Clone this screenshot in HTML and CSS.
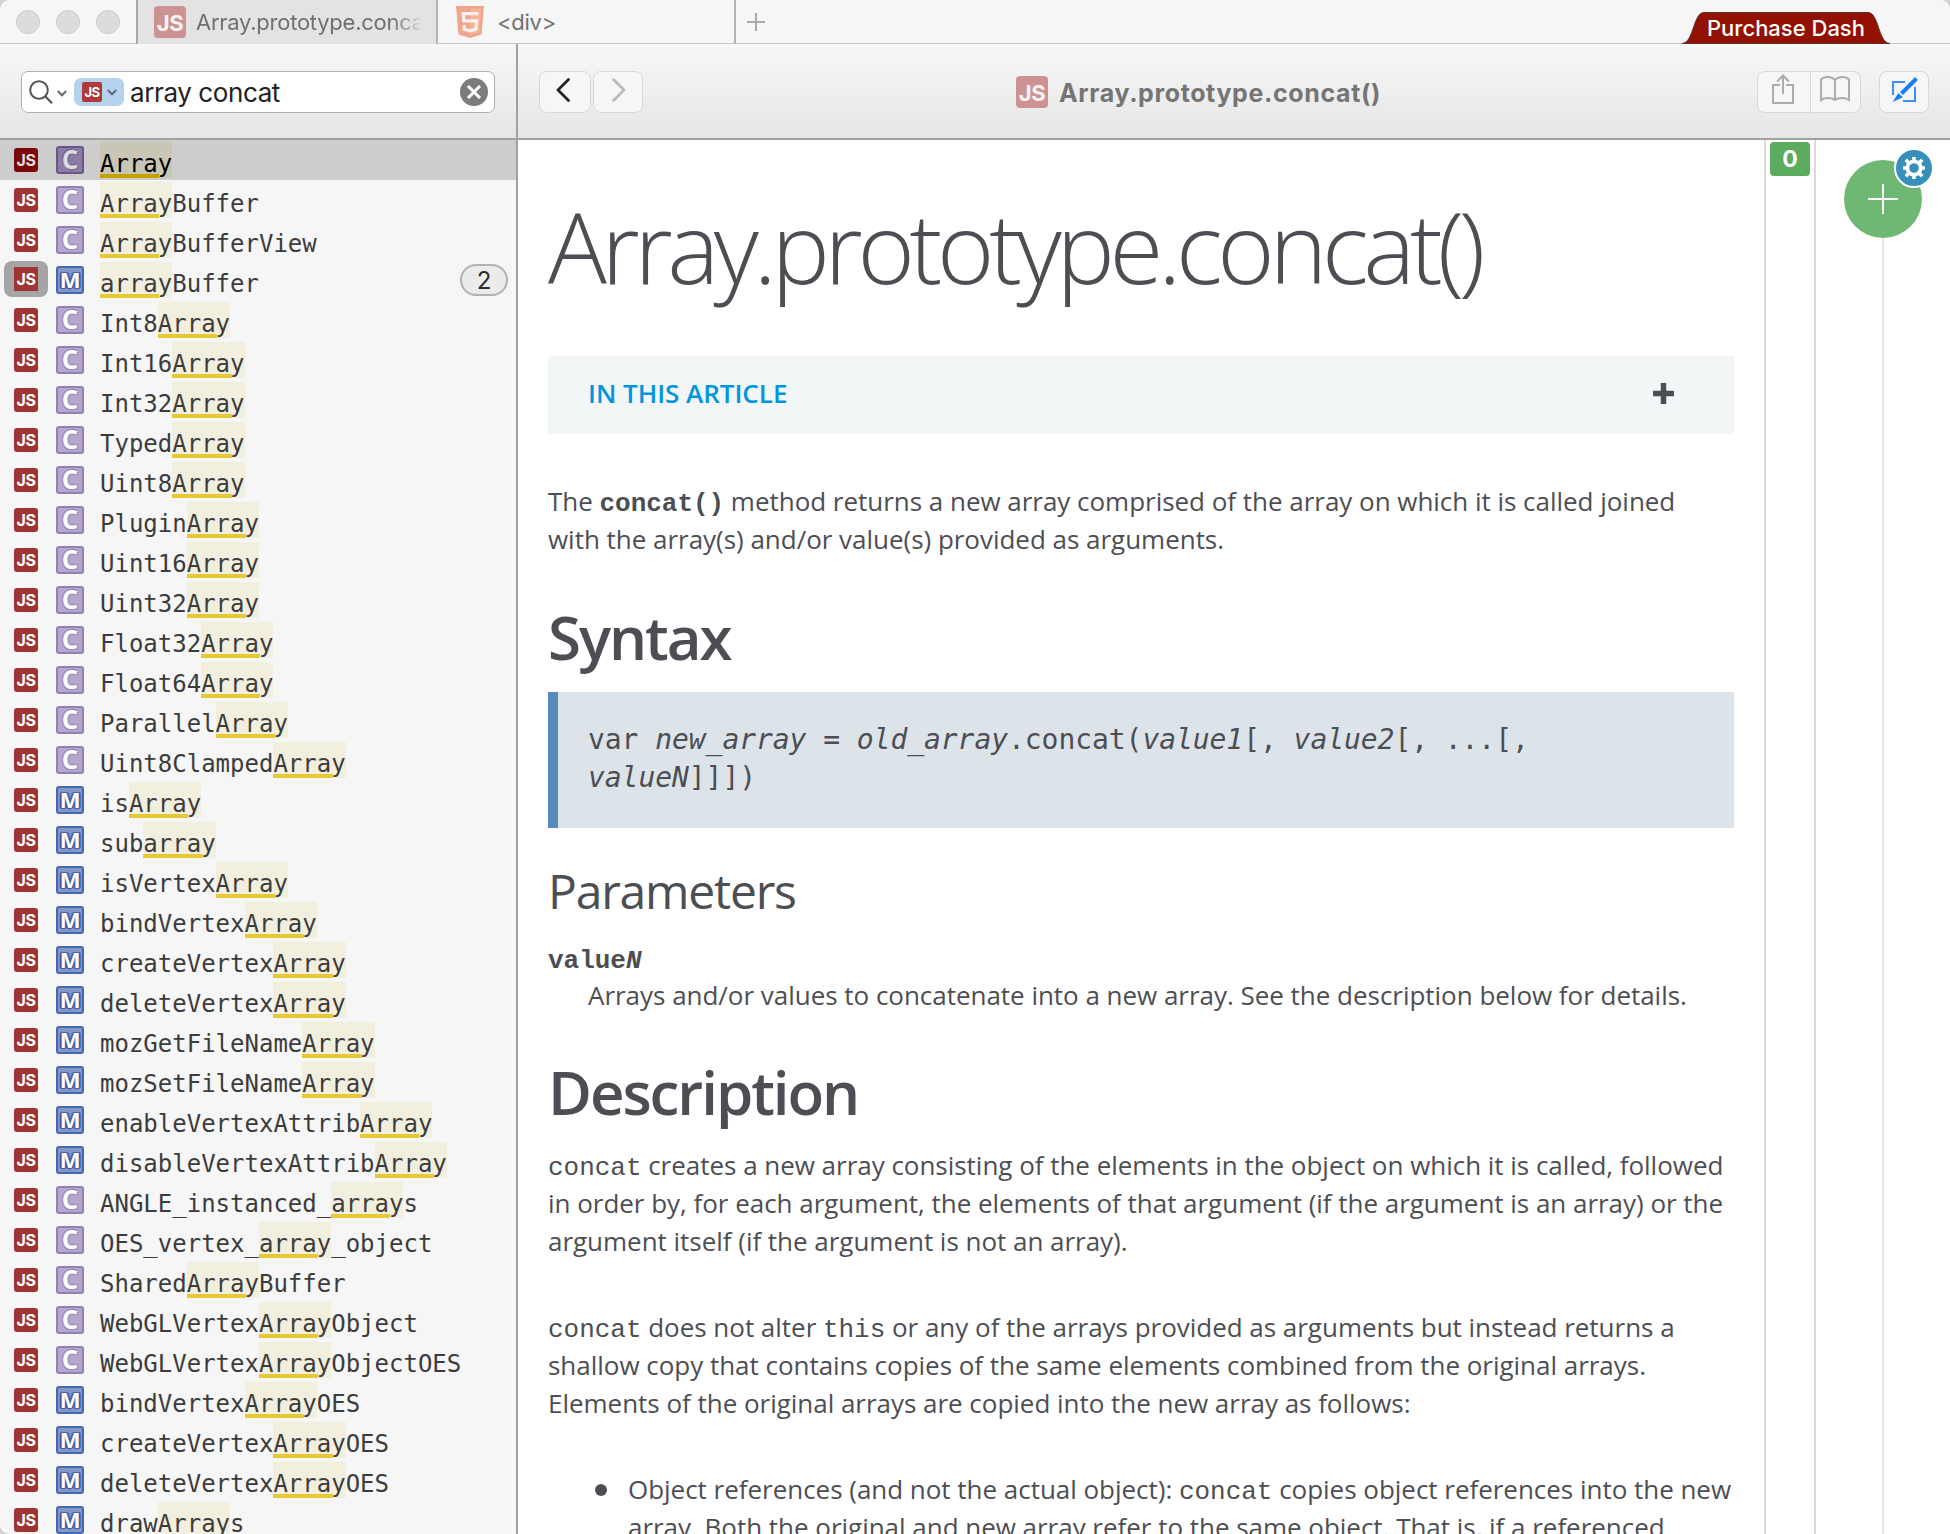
FILE: index.html
```html
<!DOCTYPE html>
<html lang="en">
<head>
<meta charset="utf-8">
<title>Array.prototype.concat()</title>
<link rel="stylesheet" href="styles.css">
</head>
<body>
<div class="window">
  <header class="titlebar">
    <div class="lights"><i></i><i></i><i></i></div>
    <div class="tab active"><b class="js js-lg faded">JS</b><span class="tab-text fade">Array.prototype.concat()</span></div>
    <div class="tab">
      <svg class="html5" width="28" height="32" viewBox="0 0 28 32"><path fill="#f0a58f" d="M0 0h28l-2.500 28.500L14 32 2.500 28.500z"/><path fill="#f5b295" d="M14 2.500h11.300l-2.100 24L14 29z"/><path fill="none" stroke="#fbf1ed" stroke-width="3.200" d="M22.500 7.600H7.200l.7 7.300h12.800l-.8 8.300-5.900 1.700-5.700-1.700-.3-4"/></svg>
      <span class="tab-text">&lt;div&gt;</span>
    </div>
    <div class="newtab"><svg width="18" height="18" viewBox="0 0 18 18"><path stroke="#a9a9a9" stroke-width="2" d="M9 0v18M0 9h18"/></svg></div>
    <div class="purchase">
      <svg width="208" height="32" viewBox="0 0 208 32"><path fill="#931100" stroke="#5c3029" d="M0 31.500C12 31 11 .5 22 .5h164C197 .5 196 31 208 31.500z"/></svg>
      <span>Purchase Dash</span>
    </div>
  </header>
  <div class="toolbar">
    <div class="search-pane">
      <div class="search">
        <svg class="glass" width="24" height="25" viewBox="0 0 24 25"><circle cx="10" cy="10" r="8.800" fill="none" stroke="#555" stroke-width="2"/><path stroke="#555" stroke-width="2.200" d="M16.200 16.200l6.800 7"/></svg>
        <svg class="chev" width="10" height="7" viewBox="0 0 10 7"><path fill="none" stroke="#6a6a6a" stroke-width="2" d="M.8 1l4.200 4.300L9.200 1"/></svg>
        <div class="token"><b class="js js-sm">JS</b><svg width="10" height="7" viewBox="0 0 10 7"><path fill="none" stroke="#5e6d7c" stroke-width="2" d="M.8 1l4.200 4.300L9.200 1"/></svg></div>
        <span class="query">array concat</span>
        <svg class="clear" width="28" height="28" viewBox="0 0 28 28"><circle cx="14" cy="14" r="14" fill="#7c7c7c"/><path stroke="#fff" stroke-width="3" d="M8 8l12 12M20 8L8 20"/></svg>
      </div>
    </div>
    <div class="doc-bar">
      <div class="nav">
        <div class="btn back"><svg width="14" height="24" viewBox="0 0 14 24"><path fill="none" stroke="#222" stroke-width="2.800" stroke-linecap="round" stroke-linejoin="round" d="M12.500 1.500L2 12l10.500 10.500"/></svg></div>
        <div class="btn fwd"><svg width="14" height="24" viewBox="0 0 14 24"><path fill="none" stroke="#b9b9b9" stroke-width="2.500" stroke-linecap="round" stroke-linejoin="round" d="M1.500 1.500L12 12 1.500 22.500"/></svg></div>
      </div>
      <div class="doc-title"><b class="js js-lg faded">JS</b><span>Array.prototype.concat()</span></div>
      <div class="actions">
        <div class="btn share"><svg width="22" height="30" viewBox="0 0 22 30"><path fill="none" stroke="#acacac" stroke-width="2" d="M8 11H1v18h20V11h-7M11 20V2M5.200 7.500L11 1.500l5.800 6"/></svg></div>
        <div class="btn book"><svg width="30" height="26" viewBox="0 0 30 26"><path fill="none" stroke="#acacac" stroke-width="2" d="M15 4C12 .2 4 .2 1 3.500V24c3.500-2.800 11-2.800 14 0 3-2.800 10.500-2.800 14 0V3.500C26 .2 18 .2 15 4zv20"/></svg></div>
        <div class="btn edit"><svg width="27" height="26" viewBox="0 0 27 26"><path fill="none" stroke="#3a8ffb" stroke-width="2" d="M14 5H2v13M24 10v14H12"/><path stroke="#147efb" stroke-width="4" d="M10.500 16.500L25.500 1.500"/><path fill="#147efb" d="M7.500 16l4.300 4.300L1.500 25z"/></svg></div>
      </div>
    </div>
  </div>
  <div class="main">
    <ul class="results">
      <li class="sel"><b class="js">JS</b><b class="c">C</b><span><mark>Array</mark></span></li>
      <li><b class="js">JS</b><b class="c">C</b><span><mark>Array</mark>Buffer</span></li>
      <li><b class="js">JS</b><b class="c">C</b><span><mark>Array</mark>BufferView</span></li>
      <li class="group"><b class="js">JS</b><b class="m">M</b><span><mark>array</mark>Buffer</span><em class="count">2</em></li>
      <li><b class="js">JS</b><b class="c">C</b><span>Int8<mark>Array</mark></span></li>
      <li><b class="js">JS</b><b class="c">C</b><span>Int16<mark>Array</mark></span></li>
      <li><b class="js">JS</b><b class="c">C</b><span>Int32<mark>Array</mark></span></li>
      <li><b class="js">JS</b><b class="c">C</b><span>Typed<mark>Array</mark></span></li>
      <li><b class="js">JS</b><b class="c">C</b><span>Uint8<mark>Array</mark></span></li>
      <li><b class="js">JS</b><b class="c">C</b><span>Plugin<mark>Array</mark></span></li>
      <li><b class="js">JS</b><b class="c">C</b><span>Uint16<mark>Array</mark></span></li>
      <li><b class="js">JS</b><b class="c">C</b><span>Uint32<mark>Array</mark></span></li>
      <li><b class="js">JS</b><b class="c">C</b><span>Float32<mark>Array</mark></span></li>
      <li><b class="js">JS</b><b class="c">C</b><span>Float64<mark>Array</mark></span></li>
      <li><b class="js">JS</b><b class="c">C</b><span>Parallel<mark>Array</mark></span></li>
      <li><b class="js">JS</b><b class="c">C</b><span>Uint8Clamped<mark>Array</mark></span></li>
      <li><b class="js">JS</b><b class="m">M</b><span>is<mark>Array</mark></span></li>
      <li><b class="js">JS</b><b class="m">M</b><span>sub<mark>array</mark></span></li>
      <li><b class="js">JS</b><b class="m">M</b><span>isVertex<mark>Array</mark></span></li>
      <li><b class="js">JS</b><b class="m">M</b><span>bindVertex<mark>Array</mark></span></li>
      <li><b class="js">JS</b><b class="m">M</b><span>createVertex<mark>Array</mark></span></li>
      <li><b class="js">JS</b><b class="m">M</b><span>deleteVertex<mark>Array</mark></span></li>
      <li><b class="js">JS</b><b class="m">M</b><span>mozGetFileName<mark>Array</mark></span></li>
      <li><b class="js">JS</b><b class="m">M</b><span>mozSetFileName<mark>Array</mark></span></li>
      <li><b class="js">JS</b><b class="m">M</b><span>enableVertexAttrib<mark>Array</mark></span></li>
      <li><b class="js">JS</b><b class="m">M</b><span>disableVertexAttrib<mark>Array</mark></span></li>
      <li><b class="js">JS</b><b class="c">C</b><span>ANGLE_instanced_<mark>array</mark>s</span></li>
      <li><b class="js">JS</b><b class="c">C</b><span>OES_vertex_<mark>array</mark>_object</span></li>
      <li><b class="js">JS</b><b class="c">C</b><span>Shared<mark>Array</mark>Buffer</span></li>
      <li><b class="js">JS</b><b class="c">C</b><span>WebGLVertex<mark>Array</mark>Object</span></li>
      <li><b class="js">JS</b><b class="c">C</b><span>WebGLVertex<mark>Array</mark>ObjectOES</span></li>
      <li><b class="js">JS</b><b class="m">M</b><span>bindVertex<mark>Array</mark>OES</span></li>
      <li><b class="js">JS</b><b class="m">M</b><span>createVertex<mark>Array</mark>OES</span></li>
      <li><b class="js">JS</b><b class="m">M</b><span>deleteVertex<mark>Array</mark>OES</span></li>
      <li><b class="js">JS</b><b class="m">M</b><span>draw<mark>Array</mark>s</span></li>
    </ul>
    <article class="doc">
      <h1>Array.prototype.concat()</h1>
      <div class="toc"><span>IN THIS ARTICLE</span><svg width="21" height="21" viewBox="0 0 21 21"><path stroke="#4d4e53" stroke-width="5.500" stroke-linecap="square" stroke-linejoin="round" d="M10.500 2.800v15.400M2.800 10.500h15.400"/></svg></div>
      <p class="intro">The <code><strong>concat()</strong></code> method returns a new array comprised of the array on which it is called joined<br>with the array(s) and/or value(s) provided as arguments.</p>
      <h2 class="h-syntax">Syntax</h2>
      <pre class="syntax">var <i>new_array</i> = <i>old_array</i>.concat(<i>value1</i>[, <i>value2</i>[, ...[,
<i>valueN</i>]]])</pre>
      <h3>Parameters</h3>
      <dl>
        <dt><code>value<i>N</i></code></dt>
        <dd>Arrays and/or values to concatenate into a new array. See the description below for details.</dd>
      </dl>
      <h2 class="h-desc">Description</h2>
      <p class="first"><code>concat</code> creates a new array consisting of the elements in the object on which it is called, followed<br>in order by, for each argument, the elements of that argument (if the argument is an array) or the<br>argument itself (if the argument is not an array).</p>
      <p class="second"><code>concat</code> does not alter <code>this</code> or any of the arrays provided as arguments but instead returns a<br>shallow copy that contains copies of the same elements combined from the original arrays.<br>Elements of the original arrays are copied into the new array as follows:</p>
      <ul class="notes"><li>Object references (and not the actual object): <code>concat</code> copies object references into the new<br>array. Both the original and new array refer to the same object. That is, if a referenced</li></ul>
    </article>
    <aside class="counter"><span>0</span></aside>
    <aside class="rail">
      <div class="add">
        <svg width="78" height="78" viewBox="0 0 78 78"><circle cx="39" cy="39" r="39" fill="#6fb874"/><path stroke="#fff" stroke-width="2" d="M39 24v30M24 39h30"/></svg>
        <svg class="gear" width="40" height="40" viewBox="-20 -20 40 40"><circle r="19" fill="#3790b9" stroke="#fff" stroke-width="2"/><circle r="6.700" fill="none" stroke="#fff" stroke-width="3.800"/><path stroke="#fff" stroke-width="3.600" d="M0-7.500V-11M0 7.500V11M-7.500 0H-11M7.500 0H11M-5.500-5.500l-2.700-2.700M5.500 5.500l2.700 2.700M-5.500 5.500l-2.700 2.700M5.500-5.500l2.700-2.700"/></svg>
      </div>
      <div class="thread"></div>
    </aside>
  </div>
</div>
</body>
</html>
```
FILE: styles.css
```css
* { box-sizing: border-box; }
body { margin: 0; background: #d2d2d2; font-family: Inter, "Liberation Sans", sans-serif; }
svg { display: block; flex: none; }
.window { width: 1950px; height: 1534px; overflow: hidden; border-radius: 10px 10px 0 10px; background: #fff; display: flex; flex-direction: column; }

/* title bar */
.titlebar { height: 44px; flex: none; display: flex; background: #f6f6f6; border-bottom: 1px solid #c6c6c6; }
.lights { width: 136px; padding: 10px 0 0 16px; display: flex; gap: 16px; flex: none; }
.lights i { width: 24px; height: 24px; border-radius: 50%; background: #dcdcdc; border: 1px solid #cbcbcb; }
.tab { width: 298px; height: 44px; flex: none; display: flex; align-items: flex-start; border-right: 2px solid #b4b4b4; padding: 6px 16px 0 18px; color: #717171; font-size: 22px; }
.tab.active { width: 302px; background: #e3e3e3; border-left: 2px solid #a8a8a8; padding-left: 16px; }
.tab-text { line-height: 32px; margin-left: 11px; overflow: hidden; white-space: nowrap; letter-spacing: -.25px; }
.html5 + .tab-text { margin-left: 13px; }
.fade { margin-left: 10px; width: 226px; -webkit-mask-image: linear-gradient(90deg, #000 195px, transparent 228px); mask-image: linear-gradient(90deg, #000 195px, transparent 228px); }
.newtab { padding: 13px 11px; flex: 1; }
.purchase { position: relative; width: 208px; margin: 12px 60px 0 0; height: 32px; flex: none; }
.purchase span { position: absolute; left: 25px; top: 1px; line-height: 30px; color: #fff; font-size: 22px; font-weight: 500; white-space: nowrap; }

.js { display: block; flex: none; width: 24px; height: 24px; border-radius: 3px; background: #a03432; color: #fff; font: 700 16px/25px Inter, sans-serif; text-align: center; letter-spacing: -.5px; }
.js-lg { width: 32px; height: 32px; font-size: 22px; line-height: 34px; border-radius: 4px; }
.js-lg.faded { background: #cc9392; color: #fbf4f4; }
.js-sm { width: 20px; height: 20px; font-size: 13px; line-height: 21px; border-radius: 2px; background: #b03a3a; }

/* toolbar */
.toolbar { height: 96px; flex: none; display: flex; background: linear-gradient(#f7f7f7, #e6e6e6); border-bottom: 2px solid #a1a1a1; }
.search-pane { width: 518px; border-right: 2px solid #a1a1a1; padding: 27px 21px; }
.search { height: 42px; border: 1px solid #b0b0b0; border-radius: 7px; background: #fff; display: flex; align-items: center; padding: 0 6px 0 8px; }
.glass { margin-left: -1px; }
.chev { margin: 2px 7px 0 4px; }
.token { width: 50px; height: 28px; border-radius: 7px; background: #b5d2ec; display: flex; align-items: center; gap: 5px; padding-left: 8px; flex: none; }
.query { flex: 1; margin-left: 6px; padding-top: 2px; font-size: 26px; line-height: 40px; color: #222; letter-spacing: -.4px; white-space: nowrap; }
.doc-bar { flex: 1; display: flex; align-items: flex-start; padding: 27px 21px 0; }
.nav { display: flex; gap: 2px; width: 477px; }
.btn { height: 42px; border: 1px solid #d9d9d9; border-radius: 8px; background: #f6f6f6; display: flex; justify-content: center; }
.back { width: 52px; padding: 6px 5px 0 0; }
.fwd { width: 50px; padding: 6px 0 0 2px; }
.doc-title { display: flex; gap: 11px; padding-top: 5px; flex: 1; font-size: 25px; font-weight: 700; line-height: 34px; letter-spacing: .62px; color: #757575; white-space: nowrap; }
.actions { display: flex; }
.share { width: 54px; border-radius: 8px 0 0 8px; padding: 2px 2px 0 0; }
.book { width: 50px; border-left: 0; border-radius: 0 8px 8px 0; padding: 4px 2px 0 0; }
.edit { width: 50px; margin-left: 18px; padding-top: 5px; }

/* result list */
.main { flex: 1; display: flex; min-height: 0; }
.results { width: 518px; flex: none; margin: 0; padding: 0; list-style: none; background: #f6f6f6; border-right: 2px solid #a1a1a1; overflow: hidden; }
.results li { height: 40px; display: flex; padding: 2px 8px 0 14px; font: 24px/36px "DejaVu Sans Mono", monospace; color: #3c3c3c; }
.results li > span { margin-left: 16px; white-space: nowrap; padding-top: 4px; line-height: 36px; flex: 1; }
.results .js { margin-top: 6px; }
.c, .m { width: 28px; height: 28px; margin: 4px 0 0 18px; flex: none; border-radius: 3px; border: 2px solid #9380b6; background: #b4a6cd; color: #fff; font: 700 26px/23px "Open Sans", sans-serif; text-align: center; text-shadow: 1px 1px #9c89bf, -1px 1px #9c89bf, 1px -1px #9c89bf, -1px -1px #9c89bf; }
.m { border-color: #4369ae; background: #8496c9; font-size: 22px; text-shadow: 1px 1px #4460ab, -1px 1px #4460ab, 1px -1px #4460ab, -1px -1px #4460ab, 2px 0 #4460ab, -2px 0 #4460ab; }
mark { display: inline-block; height: 36px; margin-top: -4px; padding-top: 4px; vertical-align: top; color: inherit; background: linear-gradient(#e9c933, #e9c933) 0 100% / calc(100% - 13px) 4px no-repeat #f3efdf; }
.sel { background: #cdcdcd; }
.results .sel { color: #000; }
.sel mark { background: linear-gradient(#c3a200, #c3a200) 0 100% / calc(100% - 13px) 4px no-repeat #cac6b5; }
.sel .js { background: #7b0807; color: #ddd; }
.sel .c { background: #8c7ca5; border-color: #69578c; color: #ddd; text-shadow: 1px 1px #725f98, -1px -1px #725f98; }
.results .group .js { background: linear-gradient(#a03432, #a03432) center / 24px 24px no-repeat #a5a5a5; width: 44px; height: 36px; margin: -1px -10px 0; line-height: 37px; border-radius: 8px; }
.count { width: 48px; height: 32px; margin-top: 2px; border: 2px solid #b1b1b1; border-radius: 16px; background: #ebebeb; text-align: center; font: 24px/29px Inter, sans-serif; color: #2a2a2a; }

/* document */
.doc { width: 1246px; flex: none; padding: 56px 30px 0; overflow: hidden; color: #4d4e53; font: 26px/38px "Open Sans", sans-serif; letter-spacing: -.026px; white-space: nowrap; }
.doc p, .doc dl, .doc dd, .doc ul { margin: 0; padding: 0; }
h1 { margin: 0; font-size: 98px; line-height: 100px; font-weight: 300; letter-spacing: -5.300px; }
.toc { margin-top: 60px; height: 78px; background: #f3f6f7; color: #0095dd; font-weight: 600; display: flex; align-items: flex-start; justify-content: space-between; padding: 18px 60px 0 40px; }
.toc svg { margin-top: 9px; }
.doc .intro { margin-top: 48px; }
h2 { margin: 0; font-size: 60px; line-height: 60px; font-weight: 640; letter-spacing: -2.050px; }
.h-syntax { margin-top: 49px; }
.syntax { margin: 25px 0 0; height: 136px; padding: 29px 30px; border-left: 10px solid #558abb; background: #dce3e9; font: 28px/38px "DejaVu Sans Mono", monospace; letter-spacing: -.060px; }
h3 { margin: 39px 0 0; font-size: 48px; line-height: 48px; font-weight: 400; letter-spacing: -1.200px; }
.doc dl { margin-top: 24px; }
dt { height: 37px; font-weight: 700; }
.doc dd { padding-left: 40px; }
code { font: inherit; font-family: "Liberation Mono", monospace; line-height: 1; }
.h-desc { margin-top: 48px; }
.doc .first { margin-top: 24px; }
.doc .second { margin-top: 48px; }
.doc .notes { margin-top: 48px; padding-left: 80px; list-style: none; }
.notes li::before { content: ""; float: left; width: 12px; height: 12px; border-radius: 50%; background: #4d4e53; margin: 14px 0 0 -33px; }

/* right rails */
.counter { width: 52px; flex: none; border: solid #dadada; border-width: 0 2px; padding: 2px 4px; }
.counter span { display: block; height: 34px; border-radius: 4px; background: #5dab5e; color: #fff; text-align: center; font: 700 23px/35px Inter, sans-serif; }
.rail { flex: 1; padding: 20px 0 0 28px; display: flex; flex-direction: column; }
.add { position: relative; width: 78px; }
.gear { position: absolute; left: 50px; top: -12px; }
.thread { flex: 1; width: 2px; margin-left: 38px; background: #e6e6e6; }
```
